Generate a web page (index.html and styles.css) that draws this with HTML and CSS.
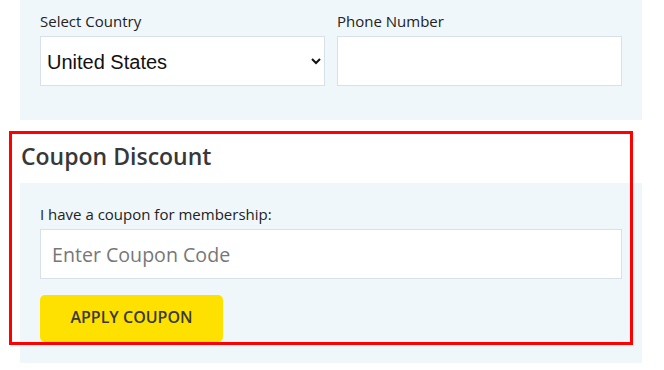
FILE: index.html
```html
<!DOCTYPE html>
<html lang="en">
<head>
  <meta charset="UTF-8" />
  <meta name="viewport" content="width=device-width, initial-scale=1.0"/>
  <title>Checkout</title>
  <link rel="stylesheet" href="styles.css">
</head>
<body>
  <div class="checkout">
    <div class="panel contact-panel">
      <div class="field-row">
        <div class="field">
          <label for="country">Select Country</label>
          <select id="country" class="select-box">
            <option>United States</option>
            <option>Canada</option>
            <option>United Kingdom</option>
          </select>
        </div>
        <div class="field">
          <label for="phone">Phone Number</label>
          <input type="text" id="phone" class="text-box">
        </div>
      </div>
    </div>

    <div class="coupon-section">
      <h2 class="section-title">Coupon Discount</h2>
      <div class="panel coupon-panel">
        <label for="coupon">I have a coupon for membership:</label>
        <input type="text" id="coupon" class="text-box coupon-input" placeholder="Enter Coupon Code">
        <button class="apply-btn">APPLY COUPON</button>
      </div>
      <div class="highlight"></div>
    </div>
  </div>
</body>
</html>
```

FILE: styles.css
```css
* {
  box-sizing: border-box;
  margin: 0;
  padding: 0;
}

body {
  font-family: 'Open Sans', sans-serif;
  background: #fff;
  color: #333;
}

.checkout {
  width: 622px;
  margin-left: 20px;
}

.panel {
  background: #eff7fa;
  padding: 0 20px;
}

.contact-panel {
  height: 120px;
  padding-top: 10px;
}

.field-row {
  display: flex;
  gap: 12px;
}

.field {
  flex: 1;
  min-width: 0;
  display: flex;
  flex-direction: column;
}

label {
  font-size: 15px;
  color: #222;
  line-height: 20px;
  margin-top: 1px;
  margin-bottom: 5px;
}

.select-box,
.text-box {
  width: 100%;
  height: 50px;
  border: 1px solid #d8e1ea;
  background: #fff;
  font-family: 'Liberation Sans', Arial, sans-serif;
  font-size: 20px;
  color: #111;
  outline: none;
}

.select-box {
  padding: 2px 0 0 2px;
}

.text-box {
  padding: 0 11px;
}

.coupon-section {
  position: relative;
  margin-top: 12px;
}

.section-title {
  font-size: 23px;
  font-weight: 600;
  color: #383838;
  line-height: 26px;
  padding: 11px 0 14px 1px;
}

.coupon-panel {
  display: flex;
  flex-direction: column;
  align-items: flex-start;
  padding-top: 20px;
  padding-bottom: 21px;
}

.coupon-input {
  font-family: 'Open Sans', sans-serif;
  font-size: 19.6px;
}

.coupon-input::placeholder {
  color: #777;
}

.apply-btn {
  margin-top: 16px;
  width: 183px;
  height: 47px;
  padding-bottom: 3px;
  background: #ffe100;
  border: none;
  border-radius: 5px;
  font-family: 'Open Sans', sans-serif;
  font-size: 16px;
  font-weight: 600;
  color: #3a3a3a;
  cursor: pointer;
}

.highlight {
  position: absolute;
  left: -11px;
  top: -1px;
  width: 624px;
  height: 214px;
  border: 3px solid #f00;
  pointer-events: none;
}
```
